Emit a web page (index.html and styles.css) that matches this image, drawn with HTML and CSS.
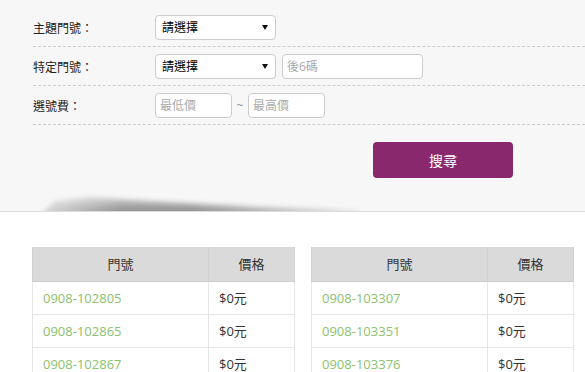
FILE: index.html
```html
<!DOCTYPE html>
<html lang="zh-Hant">
<head>
  <meta charset="UTF-8" />
  <title>門號查詢</title>
  <meta name="viewport" content="width=device-width, initial-scale=1.0">
  <link rel="stylesheet" href="styles.css">
</head>
<body>

  <div class="search">
    <form class="search-form">
      <div class="row">
        <label class="row-label">主題門號：</label>
        <div class="select-box">
          <select><option>請選擇</option></select>
        </div>
      </div>
      <div class="row">
        <label class="row-label">特定門號：</label>
        <div class="select-box">
          <select><option>請選擇</option></select>
        </div>
        <input type="text" class="text-input wide" placeholder="後6碼">
      </div>
      <div class="row">
        <label class="row-label">選號費：</label>
        <input type="text" class="text-input short" placeholder="最低價">
        <span class="tilde">~</span>
        <input type="text" class="text-input short" placeholder="最高價">
      </div>
      <div class="actions">
        <button type="button" class="btn-search">搜尋</button>
      </div>
    </form>
    <!-- curved shadow on the bottom edge -->
    <div class="divider-shadow"><div class="shadow-blur"><div class="shadow-shape"></div></div></div>
  </div>

  <div class="results">
    <table class="num-table">
      <thead>
        <tr><th class="col-num">門號</th><th class="col-price">價格</th></tr>
      </thead>
      <tbody>
        <tr><td class="num">0908-102805</td><td>$0元</td></tr>
        <tr><td class="num">0908-102865</td><td>$0元</td></tr>
        <tr><td class="num">0908-102867</td><td>$0元</td></tr>
      </tbody>
    </table>

    <table class="num-table">
      <thead>
        <tr><th class="col-num">門號</th><th class="col-price">價格</th></tr>
      </thead>
      <tbody>
        <tr><td class="num">0908-103307</td><td>$0元</td></tr>
        <tr><td class="num">0908-103351</td><td>$0元</td></tr>
        <tr><td class="num">0908-103376</td><td>$0元</td></tr>
      </tbody>
    </table>
  </div>

</body>
</html>
```

FILE: styles.css
```css
* {
  margin: 0; padding: 0; box-sizing: border-box;
  font-family: 'Open Sans', 'Noto Sans CJK TC', sans-serif;
}
html, body {
  width: 100%; height: 100%;
  background: #fff;
  color: #333;
  overflow: hidden;
}

/* top search area */
.search {
  position: relative;
  background: #f7f7f7;
  padding: 8px 0 33px 33px;
  border-bottom: 1px solid #dcdcdc;
}

.row {
  display: flex; align-items: center;
  padding: 7px 0 6px;
  border-bottom: 1px dashed #ccc;
}

.row-label {
  width: 122px;
  font-size: 12px;
  color: #222;
}

.select-box {
  position: relative;
  width: 121px; height: 25px;
  margin-right: 6px;
}
.select-box::after { /* little black arrow */
  content: "";
  position: absolute; right: 8px; top: 10px;
  border-left: 3px solid transparent;
  border-right: 3px solid transparent;
  border-top: 5px solid #111;
  pointer-events: none;
}
.select-box select {
  -webkit-appearance: none; appearance: none;
  width: 100%; height: 100%;
  background: #fff;
  border: 1px solid #ccc; border-radius: 4px;
  padding-left: 6px;
  font-size: 12px; color: #000;
  outline: none;
}

.text-input {
  height: 25px;
  background: #fff;
  border: 1px solid #ccc; border-radius: 4px;
  padding-left: 4px;
  font-size: 12px; color: #333;
  outline: none;
}
.text-input::placeholder { color: #aaa; }
.text-input.wide { width: 141px; }
.text-input.short { width: 77px; }

.tilde {
  width: 16px;
  text-align: center;
  font-size: 12px; color: #999;
}

.actions {
  display: flex;
  padding: 17px 0 0 340px;
}
.btn-search {
  width: 140px; height: 36px;
  background: #8a286d;
  border: none; border-radius: 4px;
  color: #fff; font-size: 14px;
  cursor: pointer;
}

.divider-shadow {
  position: absolute;
  left: 20px; bottom: 0;
  width: 340px; height: 22px;
  overflow: hidden;
  pointer-events: none;
}
.shadow-blur {
  width: 100%; height: 32px; /* runs past the line so the edge stays dark */
  filter: blur(2.5px);
}
.shadow-shape {
  width: 100%; height: 100%;
  background: linear-gradient(to right, rgba(0,0,0,0.1) 5%, rgba(0,0,0,0.4) 30%, rgba(0,0,0,0.4) 50%, rgba(0,0,0,0.2) 80%, rgba(0,0,0,0.05) 100%);
  -webkit-mask-image: linear-gradient(to bottom, rgba(0,0,0,0.3) 20%, #000 65%);
  mask-image: linear-gradient(to bottom, rgba(0,0,0,0.3) 20%, #000 65%);
  clip-path: polygon(14px 32px, 35px 12px, 70px 8px, 130px 12px, 240px 18px, 340px 21px, 340px 32px);
}

/* result tables */
.results {
  display: flex; gap: 16px;
  padding: 35px 0 0 32px;
}

.num-table {
  width: 263px;
  border-collapse: collapse;
  font-size: 13px;
}
.num-table th {
  height: 34px;
  background: #dadada;
  font-weight: normal; color: #333;
  border: 1px solid #d0d0d0;
  border-top: none;
}
.num-table .col-num { width: 176px; }
.num-table td {
  height: 33px;
  padding-left: 10px;
  border: 1px solid #e6e6e6;
  color: #333;
}
.num-table td.num { color: #8cc16e; }
```
